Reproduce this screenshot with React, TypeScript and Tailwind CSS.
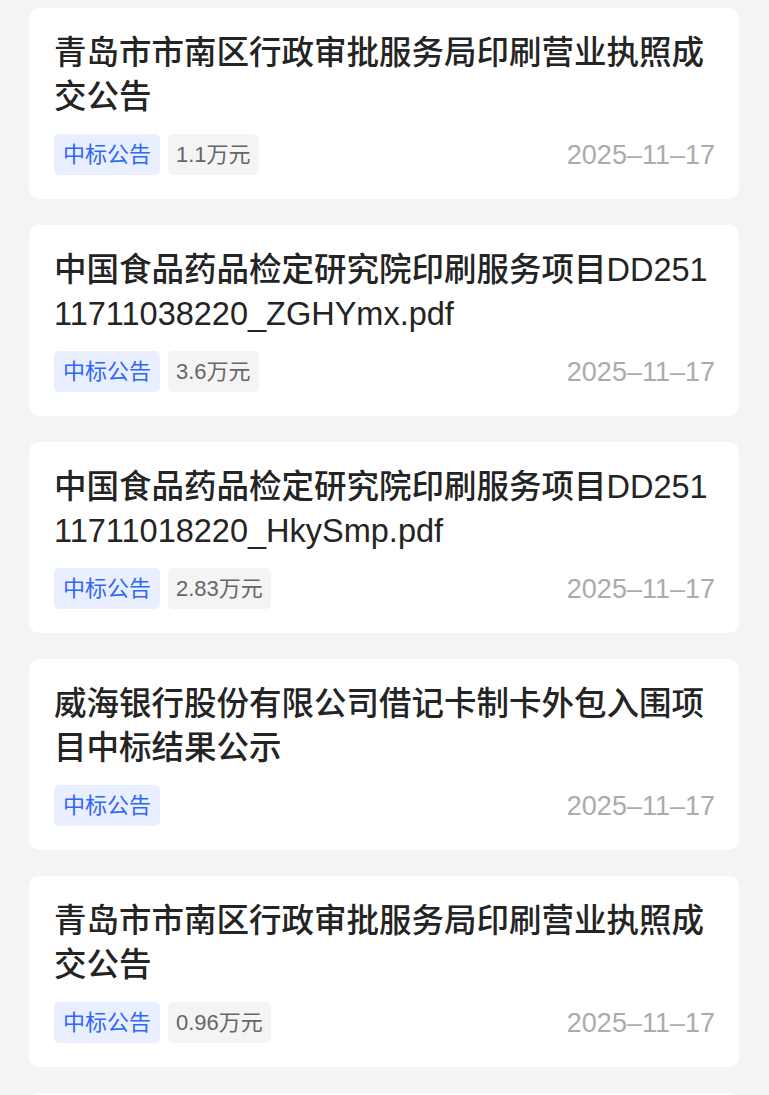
import React from "react";

type Notice = {
  title: string;
  tag: string;
  amount?: string;
  date: string;
};

const notices: Notice[] = [
  {
    title: "青岛市市南区行政审批服务局印刷营业执照成交公告",
    tag: "中标公告",
    amount: "1.1万元",
    date: "2025–11–17",
  },
  {
    title: "中国食品药品检定研究院印刷服务项目DD25111711038220_ZGHYmx.pdf",
    tag: "中标公告",
    amount: "3.6万元",
    date: "2025–11–17",
  },
  {
    title: "中国食品药品检定研究院印刷服务项目DD25111711018220_HkySmp.pdf",
    tag: "中标公告",
    amount: "2.83万元",
    date: "2025–11–17",
  },
  {
    title: "威海银行股份有限公司借记卡制卡外包入围项目中标结果公示",
    tag: "中标公告",
    date: "2025–11–17",
  },
  {
    title: "青岛市市南区行政审批服务局印刷营业执照成交公告",
    tag: "中标公告",
    amount: "0.96万元",
    date: "2025–11–17",
  },
];

const font = "font-['Liberation_Sans','Noto_Sans_CJK_SC',sans-serif]";

function NoticeCard({ notice }: { notice: Notice }) {
  return (
    <div className="bg-white rounded-[10px] pt-[23px] pb-[24px] pl-[25px] pr-[24px]">
      <h3 className="text-[32.5px] leading-[44px] font-medium text-[#242424] break-all">
        {notice.title}
      </h3>
      <div className="mt-[15px] h-[41px] flex items-center justify-between">
        <div className="flex items-center gap-[8px]">
          <span className="h-[41px] flex items-center px-[9px] rounded-[5px] bg-[#e9efff] text-[#2f67f6] text-[22px]">
            {notice.tag}
          </span>
          {notice.amount && (
            <span className="h-[41px] flex items-center px-[8px] rounded-[5px] bg-[#f4f4f4] text-[#666666] text-[22px]">
              {notice.amount}
            </span>
          )}
        </div>
        <span className="text-[27px] leading-none text-[#ababab] pt-[2px]">{notice.date}</span>
      </div>
    </div>
  );
}

export default function App() {
  return (
    <div className={`${font} bg-[#f4f4f4] h-[1095px] overflow-hidden pt-[8px] pl-[29px] pr-[30px]`}>
      <div className="flex flex-col gap-[26px]">
        {notices.map((n, i) => (
          <NoticeCard key={i} notice={n} />
        ))}
        {/* next card peeking in at the bottom */}
        <div className="bg-white rounded-[10px] h-[40px]" />
      </div>
    </div>
  );
}
